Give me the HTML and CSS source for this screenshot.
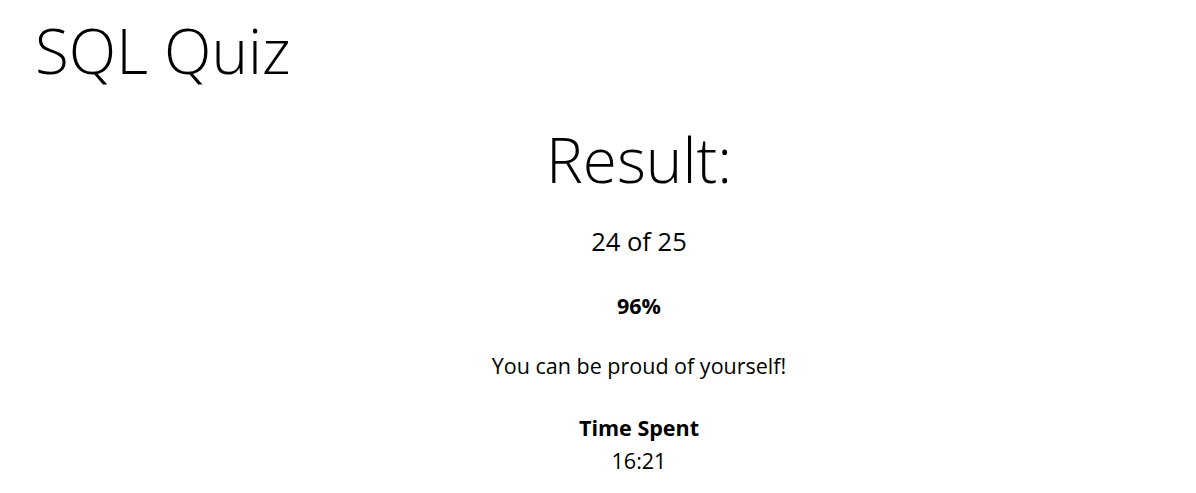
FILE: index.html
```html
<!DOCTYPE html>
<html lang="en">
<head>
<meta charset="utf-8">
<title>SQL Quiz</title>
<link rel="stylesheet" href="styles.css">
</head>
<body>
<header class="site-header">
  <h1 class="site-title">SQL Quiz</h1>
</header>
<main class="result">
  <h2 class="result-title">Result:</h2>
  <p class="result-score">24 of 25</p>
  <p class="result-percent">96%</p>
  <p class="result-message">You can be proud of yourself!</p>
  <div class="result-time">
    <p class="time-label">Time Spent</p>
    <p class="time-value">16:21</p>
  </div>
</main>
</body>
</html>
```
FILE: styles.css
```css
html, body {
  margin: 0;
  padding: 0;
  background: #fff;
  color: #000;
  font-family: "Open Sans", "Noto Sans", sans-serif;
}
.site-header {
  padding: 10px 0 0 35px;
}
.site-title {
  margin: 0;
  font-size: 62px;
  font-weight: 300;
  line-height: 80px;
}
.result {
  display: flex;
  flex-direction: column;
  align-items: center;
  text-align: center;
  padding-left: 82px;
}
.result-title {
  margin: 29px 0 0;
  font-size: 62px;
  font-weight: 300;
  line-height: 80px;
}
.result p {
  margin: 0;
}
.result-score {
  margin-top: 26px !important;
  font-size: 25.5px;
  line-height: 32px;
}
.result-percent {
  margin-top: 34px !important;
  font-size: 21.5px;
  font-weight: 700;
  line-height: 30px;
}
.result-message {
  margin-top: 30px !important;
  font-size: 21.5px;
  line-height: 30px;
}
.result-time {
  margin-top: 32px;
}
.time-label {
  font-size: 21.5px;
  font-weight: 700;
  line-height: 30px;
}
.time-value {
  font-size: 21.5px;
  line-height: 36px;
}
```
